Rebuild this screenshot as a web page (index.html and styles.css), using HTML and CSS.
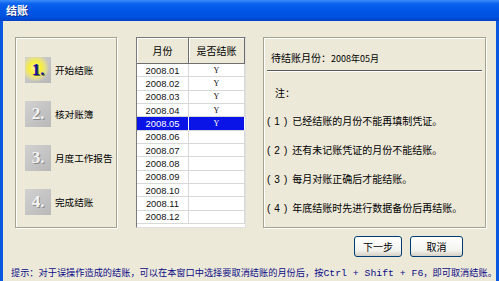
FILE: index.html
```html
<!DOCTYPE html>
<html lang="zh-CN">
<head>
  <meta charset="UTF-8">
  <title>结账</title>
  <link rel="stylesheet" href="styles.css">
</head>
<body>
  <div class="window">
    <!-- Title bar -->
    <div class="titlebar">结账</div>

    <div class="client">
      <div class="main">
        <!-- Steps -->
        <div class="steps">
          <div class="step">
            <div class="step-icon active">1.</div>
            <span>开始结账</span>
          </div>
          <div class="step">
            <div class="step-icon">2.</div>
            <span>核对账簿</span>
          </div>
          <div class="step">
            <div class="step-icon">3.</div>
            <span>月度工作报告</span>
          </div>
          <div class="step">
            <div class="step-icon">4.</div>
            <span>完成结账</span>
          </div>
        </div>

        <!-- Month grid -->
        <div class="grid">
          <div class="grid-head">
            <div class="hcell">月份</div>
            <div class="hcell">是否结账</div>
          </div>
          <div class="grid-body">
            <div class="row"><div class="cell month">2008.01</div><div class="cell flag">Y</div></div>
            <div class="row"><div class="cell month">2008.02</div><div class="cell flag">Y</div></div>
            <div class="row"><div class="cell month">2008.03</div><div class="cell flag">Y</div></div>
            <div class="row"><div class="cell month">2008.04</div><div class="cell flag">Y</div></div>
            <div class="row selected"><div class="cell month">2008.05</div><div class="cell flag">Y</div></div>
            <div class="row"><div class="cell month">2008.06</div><div class="cell flag"></div></div>
            <div class="row"><div class="cell month">2008.07</div><div class="cell flag"></div></div>
            <div class="row"><div class="cell month">2008.08</div><div class="cell flag"></div></div>
            <div class="row"><div class="cell month">2008.09</div><div class="cell flag"></div></div>
            <div class="row"><div class="cell month">2008.10</div><div class="cell flag"></div></div>
            <div class="row"><div class="cell month">2008.11</div><div class="cell flag"></div></div>
            <div class="row"><div class="cell month">2008.12</div><div class="cell flag"></div></div>
          </div>
        </div>

        <!-- Notes -->
        <div class="info">
          <div class="info-title">待结账月份：<span class="small">2008年05月</span></div>
          <div class="info-note">注：</div>
          <div class="info-item"><span class="num">(1)</span>已经结账的月份不能再填制凭证。</div>
          <div class="info-item"><span class="num">(2)</span>还有未记账凭证的月份不能结账。</div>
          <div class="info-item"><span class="num">(3)</span>每月对账正确后才能结账。</div>
          <div class="info-item"><span class="num">(4)</span>年底结账时先进行数据备份后再结账。</div>
        </div>
      </div>

      <div class="buttons">
        <button class="btn">下一步</button>
        <button class="btn">取消</button>
      </div>

      <div class="hint">提示：对于误操作造成的结账，可以在本窗口中选择要取消结账的月份后，按<span class="mono">Ctrl + Shift + F6</span>，即可取消结账。</div>
    </div>
  </div>
</body>
</html>
```

FILE: styles.css
```css
/* General */
body, html {
  margin: 0;
  padding: 0;
  overflow: hidden;
  font-family: "Noto Sans CJK SC", "Liberation Sans", sans-serif;
  background-color: #ece9d8;
}

.window {
  width: 499px;
  height: 281px;
  box-sizing: border-box;
  border-left: 3px solid #0a57e0;
  border-right: 3px solid #0a57e0;
  background-color: #ece9d8;
  display: flex;
  flex-direction: column;
}

/* Title bar */
.titlebar {
  height: 21px;
  margin: 0 -3px;
  padding-left: 6px;
  line-height: 20px;
  font-size: 11px;
  font-weight: bold;
  color: white;
  text-shadow: 1px 1px 0 #0a2a8a;
  background: linear-gradient(#3d8ef8 0%, #0a62ee 18%, #0056e6 50%, #0052df 80%, #0040c4 100%);
}

.client {
  padding: 16px 0 0 12px;
  display: flex;
  flex-direction: column;
}

.main {
  display: flex;
  height: 191px;
}

/* Steps panel */
.steps {
  width: 102px;
  box-sizing: border-box;
  border: 1px solid #a5a28f;
  box-shadow: inset 1px 1px 0 #ffffff, 1px 1px 0 #ffffff;
  padding: 19px 0 0 9px;
  display: flex;
  flex-direction: column;
  gap: 18px;
}

.step {
  display: flex;
  align-items: center;
  gap: 4px;
  height: 26px;
  font-size: 9.6px;
  color: #000;
  white-space: nowrap;
}

.step-icon {
  flex: none;
  width: 26px;
  height: 26px;
  background: linear-gradient(135deg, #d2d2d2, #b8b8b8);
  color: #f4f4f4;
  font-family: "Liberation Serif", serif;
  font-weight: bold;
  font-size: 17px;
  line-height: 26px;
  text-align: center;
  text-shadow: 1px 1px 0 #8a8a8a;
}

.step-icon.active {
  background: radial-gradient(circle at 40% 42%, #fffbb0 0, #f7ee3a 6px, #e6e08a 10px, rgba(200, 200, 200, 0) 14px),
              linear-gradient(135deg, #d2d2d2, #b8b8b8);
  color: #12129c;
  text-shadow: 1px 1px 0 #6a6a2a;
}

/* Month grid */
.grid {
  width: 110px;
  margin-left: 19px;
  box-sizing: border-box;
  border: 1px solid #7a7a7a;
  border-right-color: #e0e0e0;
  border-bottom-color: #e0e0e0;
  background-color: #ffffff;
  display: flex;
  flex-direction: column;
}

.grid-head {
  display: flex;
  height: 25px;
  background-color: #ece9d8;
  border-bottom: 1px solid #6f6f6f;
}

.hcell {
  font-size: 10px;
  text-align: center;
  line-height: 25px;
  box-sizing: border-box;
  border-right: 1px solid #6f6f6f;
  box-shadow: inset 1px 1px 0 #ffffff;
}

.hcell:first-child,
.cell.month {
  width: 52px;
}

.hcell:last-child,
.cell.flag {
  width: 56px;
}

.grid-body {
  height: 160px;
  display: grid;
  grid-auto-rows: 1fr;
  background-color: #ffffff;
}

.row {
  display: flex;
}

.cell {
  box-sizing: border-box;
  border-bottom: 1px solid #d8d8d8;
  border-right: 1px solid #d8d8d8;
  font-family: "Liberation Sans", sans-serif;
  font-size: 9.4px;
  display: flex;
  align-items: center;
  justify-content: center;
  color: #111;
}

.cell.flag {
  font-family: "Liberation Serif", serif;
  font-size: 8px;
}

.row.selected .cell {
  background-color: #0a14e6;
  color: #ffffff;
  border-right-color: #ffffff;
}

/* Notes panel */
.info {
  width: 223px;
  margin-left: 17px;
  box-sizing: border-box;
  border: 1px solid #a5a28f;
  box-shadow: inset 1px 1px 0 #ffffff, 1px 1px 0 #ffffff;
  font-size: 10px;
  color: #000;
}

.info-title {
  margin: 0 3px;
  padding: 14px 0 5px 4px;
  line-height: 12px;
  border-bottom: 1px solid #5a5a5a;
  box-shadow: 0 1px 0 #ffffff;
}

.info-title .small {
  font-size: 9px;
}

.info-note {
  padding: 16px 0 0 11px;
  line-height: 12px;
}

.info-item {
  padding: 16px 0 0 3px;
  line-height: 12px;
  white-space: nowrap;
}

.info-item .num {
  font-family: "Liberation Sans", sans-serif;
  letter-spacing: 4px;
  margin-right: 1px;
}

/* Buttons */
.buttons {
  display: flex;
  justify-content: flex-end;
  gap: 8px;
  margin-top: 8px;
  padding-right: 33px;
}

.btn {
  width: 48px;
  height: 21px;
  padding: 0;
  font-family: "Noto Sans CJK SC", sans-serif;
  font-size: 10px;
  color: #000;
  border: 1px solid #003c74;
  border-radius: 3px;
  background: linear-gradient(#ffffff, #f3f3ee 70%, #d6d0c5);
}

.btn:last-child {
  width: 53px;
}

/* Hint line */
.hint {
  margin: 9px 0 0 -4px;
  font-size: 9.2px;
  line-height: 12px;
  color: #0c0c88;
  white-space: nowrap;
}

.mono {
  font-family: "Liberation Mono", monospace;
  font-size: 9.8px;
}
```
